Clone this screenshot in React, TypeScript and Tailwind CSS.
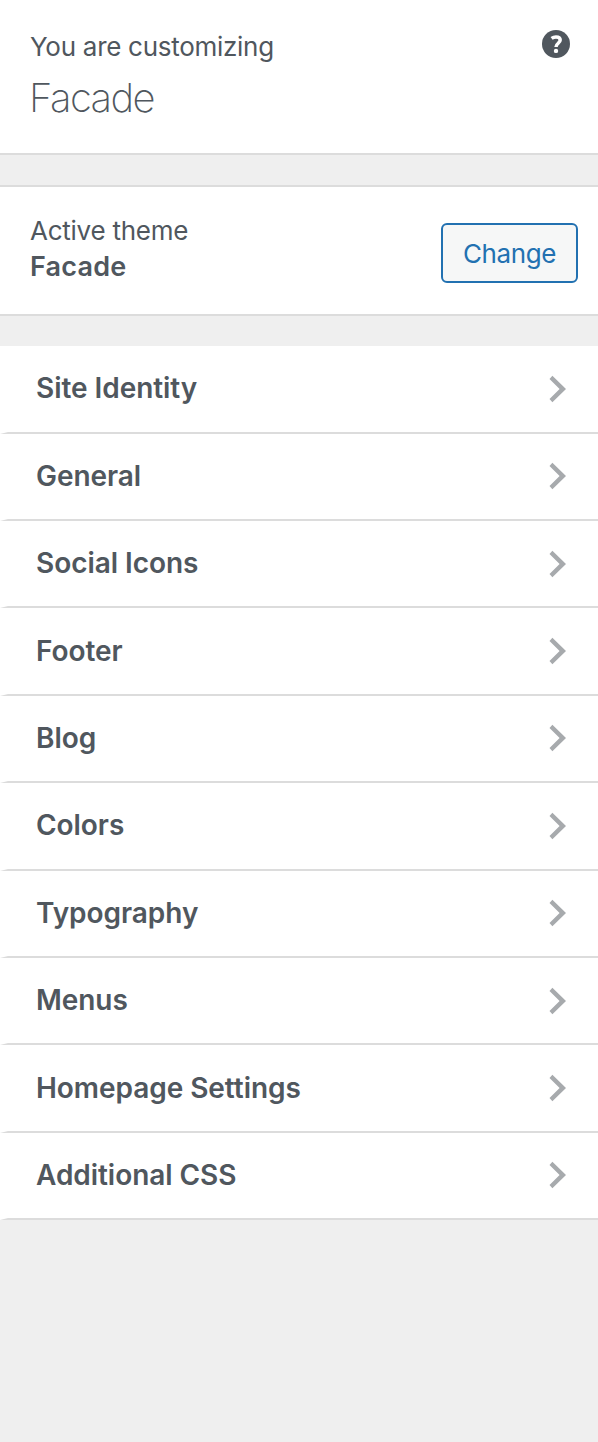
const sections = [
  'Site Identity',
  'General',
  'Social Icons',
  'Footer',
  'Blog',
  'Colors',
  'Typography',
  'Menus',
  'Homepage Settings',
  'Additional CSS',
]

function Chevron() {
  return (
    <svg width="17" height="28" viewBox="0 0 17 28">
      <path d="M0.5 3.9L3.4 0.8L17 14L3.4 27.2L0.5 24.1L10.6 14Z" fill="#a7aaad" />
    </svg>
  )
}

function HelpIcon() {
  return (
    <svg width="28" height="28" viewBox="0 0 28 28">
      <circle cx="14" cy="14" r="14" fill="#50575e" />
      <path
        d="M9.6 8.4C10.8 7.5 12.2 6.9 14 6.9C16.7 6.9 18.2 8.1 18.2 10.1C18.2 13.3 14 13.3 14 17"
        fill="none"
        stroke="#fff"
        strokeWidth="3.5"
      />
      <circle cx="14" cy="20.9" r="2.2" fill="#fff" />
    </svg>
  )
}

export default function App() {
  return (
    <div className="h-[1442px] w-[598px] bg-[#efefef] font-[Inter,sans-serif] text-[#50575e]">
      {/* Header */}
      <header className="flex h-[155px] items-start justify-between border-b-2 border-[#dcdcdc] bg-white pt-[30px] pr-7 pl-[30px]">
        <div>
          <p className="text-[26px] leading-[34px] tracking-[-0.28px]">You are customizing</p>
          <h1 className="-ml-px mt-[11px] text-[40px] leading-[46px] font-extralight tracking-[-1.6px]">Facade</h1>
        </div>
        <button aria-label="Help">
          <HelpIcon />
        </button>
      </header>

      {/* Active theme */}
      <section className="mt-[30px] flex h-[131px] items-start justify-between border-y-2 border-[#dcdcdc] bg-white pr-5 pl-[30px]">
        <div className="pt-[25px]">
          <p className="text-[26px] leading-[37px] tracking-[-0.25px]">Active theme</p>
          <p className="text-[27px] leading-9 font-semibold tracking-[0.2px]">Facade</p>
        </div>
        <button className="mt-9 h-[60px] w-[137px] rounded-md border-2 border-[#2271b1] bg-[#f6f7f7] text-[26px] tracking-[-0.4px] text-[#2271b1]">
          Change
        </button>
      </section>

      {/* Sections */}
      <ul className="mt-[30.2px]">
        {sections.map((name) => (
          <li
            key={name}
            className="flex h-[87.4px] items-center justify-between border-b-2 border-l-8 border-b-[#dcdcdc] border-l-white bg-white pr-8 pl-7"
          >
            <span className="pb-px text-[28px] font-semibold tracking-[-0.05px]">{name}</span>
            <Chevron />
          </li>
        ))}
      </ul>
    </div>
  )
}
